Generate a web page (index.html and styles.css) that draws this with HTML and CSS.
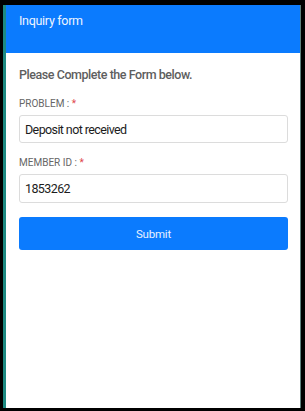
FILE: index.html
```html
<!DOCTYPE html>
<html lang="en">
<head>
    <meta charset="UTF-8">
    <meta name="viewport" content="width=device-width, initial-scale=1.0">
    <title>Inquiry form</title>
    <link rel="stylesheet" href="styles.css">
</head>
<body>
    <div class="screen">
        <header class="topbar">
            <h1>Inquiry form</h1>
        </header>

        <form class="form" onsubmit="return false;">
            <p class="intro">Please Complete the Form below.</p>

            <label class="field-label" for="problem">PROBLEM : <span class="req">*</span></label>
            <input class="field" id="problem" type="text" value="Deposit not received">

            <label class="field-label" for="member">MEMBER ID : <span class="req">*</span></label>
            <input class="field" id="member" type="text" value="1853262">

            <button class="btn-submit" type="submit">Submit</button>
        </form>
    </div>
</body>
</html>
```

FILE: styles.css
```css
* {
    margin: 0;
    padding: 0;
    box-sizing: border-box;
}

html, body {
    height: 100%;
}

body {
    background: #000;
    padding: 5px 4px 3px 3px;
    font-family: Roboto, 'Liberation Sans', sans-serif;
}

.screen {
    height: 100%;
    background: #fff;
    border-left: 3px solid #1d8a82;
    border-right: 1px solid #5e7f7c;
    display: flex;
    flex-direction: column;
}

.topbar {
    background: #0b7bfe;
    height: 48px;
    padding: 8px 13px 0;
}

.topbar h1 {
    font-size: 12.5px;
    font-weight: 400;
    line-height: 16px;
    letter-spacing: -0.3px;
    color: #eef4ff;
}

.form {
    display: flex;
    flex-direction: column;
    padding: 13px 12px 0 13px;
}

.intro {
    font-size: 12.5px;
    font-weight: 500;
    line-height: 18px;
    letter-spacing: -0.45px;
    color: #5e5e5e;
    margin-bottom: 13px;
}

.field-label {
    font-size: 10px;
    line-height: 14px;
    color: #666;
    margin-bottom: 4px;
}

.req {
    color: #e0474c;
}

.field {
    height: 28px;
    border: 1px solid #dcdcdc;
    border-radius: 3px;
    padding: 0 5px;
    font-family: inherit;
    font-size: 12.5px;
    letter-spacing: -0.6px;
    color: #1c1c1c;
    margin-bottom: 13px;
    outline: none;
}

#member {
    height: 29px;
    margin-bottom: 14px;
}

.btn-submit {
    height: 33px;
    border: none;
    border-radius: 3px;
    background: #0b7bfe;
    color: #e8f1ff;
    font-family: inherit;
    font-size: 11.5px;
    letter-spacing: -0.2px;
    cursor: pointer;
}
```
